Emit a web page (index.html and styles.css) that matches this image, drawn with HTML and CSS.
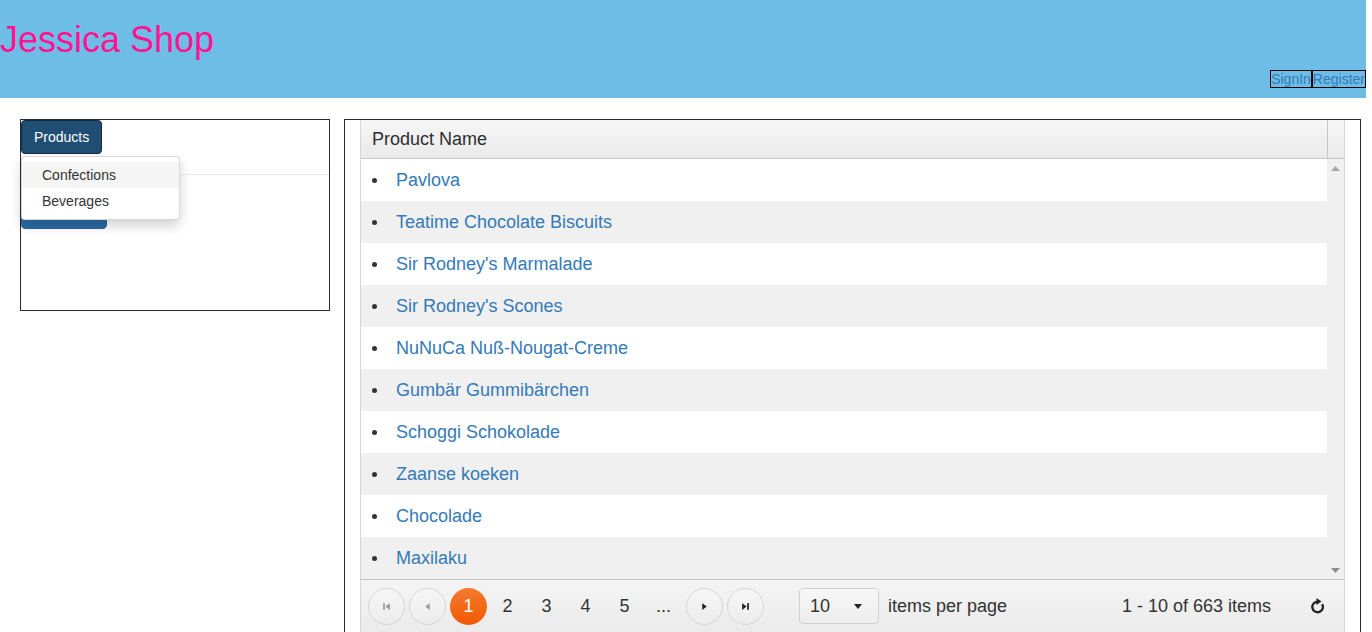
FILE: index.html
```html
<!DOCTYPE html>
<html lang="en">
<head>
<meta charset="utf-8">
<title>Jessica Shop</title>
<link rel="stylesheet" href="styles.css">
</head>
<body>
<header class="site-header">
  <h1 class="brand">Jessica Shop</h1>
  <nav class="account">
    <a class="account-link" href="#">SignIn</a><a class="account-link" href="#">Register</a>
  </nav>
</header>
<main class="layout">
  <aside class="sidebar">
    <div class="btn-group">
      <button class="btn btn-dark" type="button">Products</button>
      <ul class="dropdown-menu">
        <li class="dropdown-item is-hover">Confections</li>
        <li class="dropdown-item">Beverages</li>
      </ul>
    </div>
    <div class="divider"></div>
    <button class="btn btn-blue" type="button"></button>
  </aside>
  <section class="content">
    <div class="grid">
      <div class="grid-header">
        <div class="grid-title">Product Name</div>
        <div class="grid-scroll-head"></div>
      </div>
      <div class="grid-body">
        <ul class="rows">
          <li class="row"><a href="#">Pavlova</a></li>
          <li class="row alt"><a href="#">Teatime Chocolate Biscuits</a></li>
          <li class="row"><a href="#">Sir Rodney's Marmalade</a></li>
          <li class="row alt"><a href="#">Sir Rodney's Scones</a></li>
          <li class="row"><a href="#">NuNuCa Nuß-Nougat-Creme</a></li>
          <li class="row alt"><a href="#">Gumbär Gummibärchen</a></li>
          <li class="row"><a href="#">Schoggi Schokolade</a></li>
          <li class="row alt"><a href="#">Zaanse koeken</a></li>
          <li class="row"><a href="#">Chocolade</a></li>
          <li class="row alt"><a href="#">Maxilaku</a></li>
        </ul>
        <div class="scrollbar">
          <svg class="scroll-arrow" width="9" height="5" viewBox="0 0 9 5"><polygon points="0,5 4.5,0 9,5" fill="#a6a6a6"/></svg>
          <svg class="scroll-arrow" width="9" height="5" viewBox="0 0 9 5"><polygon points="0,0 9,0 4.5,5" fill="#8c8c8c"/></svg>
        </div>
      </div>
      <div class="pager">
        <span class="pager-nav disabled nav-first">
          <svg width="9" height="9" viewBox="0 0 8 8"><rect x="1" y="1" width="1.5" height="6" fill="#9a9a9a"/><polygon points="7,1 3,4 7,7" fill="#9a9a9a"/></svg>
        </span>
        <span class="pager-nav disabled">
          <svg width="9" height="9" viewBox="0 0 8 8"><polygon points="6,1 2,4 6,7" fill="#9a9a9a"/></svg>
        </span>
        <ul class="pages">
          <li class="page current">1</li>
          <li class="page">2</li>
          <li class="page">3</li>
          <li class="page">4</li>
          <li class="page">5</li>
          <li class="page">...</li>
        </ul>
        <span class="pager-nav nav-next">
          <svg width="9" height="9" viewBox="0 0 8 8"><polygon points="2,1 6,4 2,7" fill="#222"/></svg>
        </span>
        <span class="pager-nav nav-last">
          <svg width="9" height="9" viewBox="0 0 8 8"><polygon points="1,1 5,4 1,7" fill="#222"/><rect x="5.5" y="1" width="1.5" height="6" fill="#222"/></svg>
        </span>
        <div class="page-size">
          <span class="page-size-value">10</span>
          <svg width="8" height="5" viewBox="0 0 8 5"><polygon points="0,0 8,0 4,5" fill="#222"/></svg>
        </div>
        <span class="page-size-label">items per page</span>
        <span class="pager-info">1 - 10 of 663 items</span>
        <span class="pager-refresh">
          <svg width="17" height="17" viewBox="0 0 16 16"><path d="M8 3.4 A5 5 0 1 0 12.4 5.8" fill="none" stroke="#222" stroke-width="2.2"/><polygon points="7,0 11.8,3.3 7,6.6" fill="#222"/></svg>
        </span>
      </div>
    </div>
  </section>
</main>
</body>
</html>
```
FILE: styles.css
```css
html, body {
  margin: 0;
  padding: 0;
  background: #fff;
}

body {
  font-family: "Liberation Sans", Arial, Helvetica, sans-serif;
  color: #333;
}

/* Header */
.site-header {
  width: 1366px;
  height: 98px;
  box-sizing: border-box;
  padding-top: 19px;
  background: #6ebde6;
  display: flex;
  flex-direction: column;
}

.brand {
  margin: 0;
  font-size: 36px;
  font-weight: normal;
  line-height: 41px;
  color: #ff1493;
}

.account {
  display: flex;
  justify-content: flex-end;
  margin-top: 10px;
}

.account-link {
  font-size: 14px;
  line-height: 16px;
  color: #337ab7;
  border: 1px solid #000;
  text-decoration: none;
}

/* Layout */
.layout {
  display: flex;
  align-items: flex-start;
  gap: 14px;
  padding: 21px 0 0 20px;
}

.sidebar {
  width: 310px;
  height: 192px;
  box-sizing: border-box;
  border: 1px solid #2a2a2a;
}

.btn-group {
  position: relative;
  display: flex;
}

.btn {
  font-family: inherit;
  font-size: 14px;
  line-height: 20px;
  padding: 6px 12px;
  border-radius: 4px;
  color: #fff;
  cursor: pointer;
  margin: 0;
}

.btn-dark {
  background: #204d74;
  border: 1px solid #122b40;
}

.btn-blue {
  display: block;
  width: 86px;
  height: 34px;
  margin-top: 20px;
  background: linear-gradient(#337ab7, #2a69a2);
  border: 1px solid #2b669a;
}

.divider {
  height: 20px;
  border-bottom: 1px solid #e8e8e8;
}

.dropdown-menu {
  position: absolute;
  top: 100%;
  left: 0;
  z-index: 10;
  margin: 2px 0 0;
  padding: 5px 0;
  list-style: none;
  min-width: 157px;
  background: #fff;
  border: 1px solid rgba(0, 0, 0, 0.15);
  border-radius: 4px;
  box-shadow: 0 6px 12px rgba(0, 0, 0, 0.175);
}

.dropdown-item {
  padding: 3px 20px;
  font-size: 14px;
  line-height: 20px;
  color: #333;
  white-space: nowrap;
}

.dropdown-item.is-hover {
  background: #f5f5f5;
}

/* Content / grid */
.content {
  width: 1017px;
  box-sizing: border-box;
  border: 1px solid #2a2a2a;
  padding: 0 15px 12px;
}

.grid {
  border-left: 1px solid #d6d6d6;
  border-right: 1px solid #d6d6d6;
  font-size: 18px;
}

.grid-header {
  display: flex;
  height: 38px;
  background: linear-gradient(#f6f6f6, #eaeaea);
  border-bottom: 1px solid #c5c5c5;
}

.grid-title {
  flex: 1;
  padding-left: 11px;
  line-height: 38px;
  color: #2e2e2e;
}

.grid-scroll-head {
  width: 16px;
  border-left: 1px solid #c5c5c5;
}

.grid-body {
  display: flex;
}

.rows {
  flex: 1;
  margin: 0;
  padding: 0;
  list-style: none;
}

.row {
  display: flex;
  align-items: center;
  height: 42px;
  background: #fff;
}

.row.alt {
  background: #f0f0f0;
}

.row::before {
  content: "";
  width: 5px;
  height: 5px;
  border-radius: 50%;
  background: #333;
  margin: 1px 19px 0 11px;
}

.row a {
  color: #337ab7;
  text-decoration: none;
}

.scrollbar {
  width: 17px;
  background: #f0f0f0;
  display: flex;
  flex-direction: column;
  justify-content: space-between;
  align-items: center;
  padding: 7px 0 6px;
  box-sizing: border-box;
}

.scroll-arrow {
  display: block;
}

/* Pager */
.pager {
  display: flex;
  align-items: center;
  height: 53px;
  padding: 0 0 0 7px;
  box-sizing: border-box;
  border-top: 1px solid #c5c5c5;
  background: linear-gradient(#f4f4f4, #ebebeb);
  color: #333;
}

.pager-nav {
  width: 35px;
  height: 35px;
  border: 1px solid #d5d5d5;
  border-radius: 50%;
  background: linear-gradient(#f6f6f6, #ececec);
  display: flex;
  align-items: center;
  justify-content: center;
  margin-right: 4px;
}

.nav-next {
  margin-left: 4px;
}

.pages {
  display: flex;
  gap: 2px;
  margin: 0;
  padding: 0;
  list-style: none;
}

.page {
  width: 37px;
  height: 37px;
  line-height: 37px;
  text-align: center;
  border-radius: 50%;
}

.page.current {
  color: #fff;
  background: linear-gradient(#f47a30, #f35800);
}

.page-size {
  display: flex;
  align-items: center;
  justify-content: space-between;
  width: 80px;
  height: 36px;
  box-sizing: border-box;
  margin-left: 31px;
  padding: 0 16px 0 10px;
  border: 1px solid #cfcfcf;
  border-radius: 4px;
  background: linear-gradient(#f7f7f7, #ededed);
}

.page-size-label {
  margin-left: 9px;
}

.pager-info {
  flex: 1;
  text-align: right;
  margin-right: 33px;
}

.pager-refresh {
  display: flex;
  width: 26px;
  justify-content: center;
  margin-right: 14px;
}
```
